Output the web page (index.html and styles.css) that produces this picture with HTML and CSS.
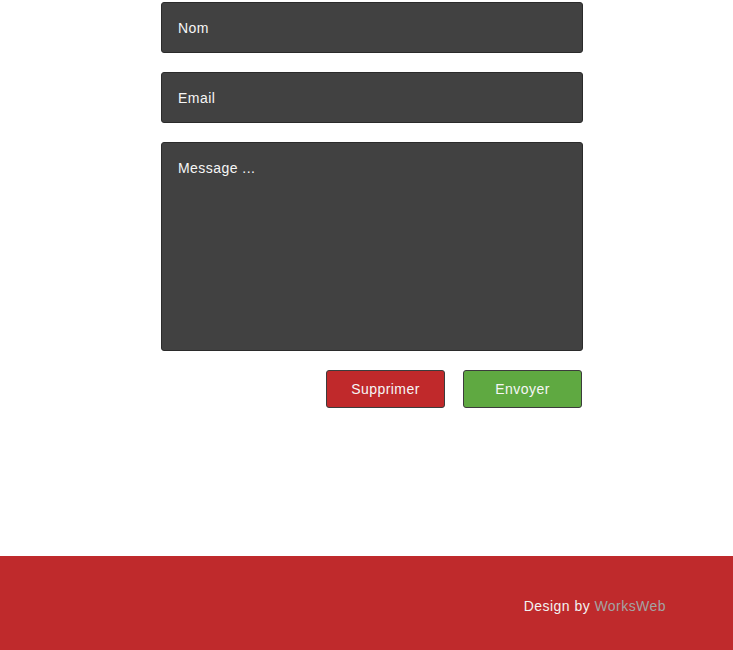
FILE: index.html
```html
<!DOCTYPE html>
<html lang="fr">
<head>
<meta charset="utf-8">
<title>Contact</title>
<link rel="stylesheet" href="styles.css">
</head>
<body>
<main class="page">
  <form class="contact-form">
    <input class="field" type="text" placeholder="Nom">
    <input class="field" type="email" placeholder="Email">
    <textarea class="field field-message" placeholder="Message ..."></textarea>
    <div class="actions">
      <button type="reset" class="btn btn-reset">Supprimer</button>
      <button type="submit" class="btn btn-send">Envoyer</button>
    </div>
  </form>
</main>
<footer class="footer">
  <p class="credit">Design by <a href="#" class="credit-link">WorksWeb</a></p>
</footer>
</body>
</html>
```
FILE: styles.css
```css
* { box-sizing: border-box; }
html, body { margin: 0; padding: 0; background: #ffffff; }
body {
  font-family: "Liberation Sans", Arial, Helvetica, sans-serif;
  font-size: 14px;
  letter-spacing: 0.45px;
  display: flex;
  flex-direction: column;
  min-height: 650px;
}
.page {
  flex: 1;
  padding-top: 2px;
}
.contact-form {
  width: 422px;
  margin-left: 161px;
  display: flex;
  flex-direction: column;
  gap: 19px;
}
.field {
  display: block;
  width: 100%;
  height: 51px;
  margin: 0;
  padding: 1px 16px 0;
  background: #414141;
  border: 1px solid #2b2b2b;
  border-radius: 3px;
  color: #f6f6f6;
  font-family: inherit;
  font-size: 14px;
  letter-spacing: 0.45px;
  outline: none;
}
.field::placeholder { color: #f6f6f6; opacity: 1; }
.field-message {
  height: 209px;
  padding-top: 16px;
  line-height: 18px;
  resize: none;
}
.actions {
  display: flex;
  justify-content: flex-end;
  gap: 18px;
  padding-right: 1px;
}
.btn {
  width: 119px;
  height: 38px;
  border: 1px solid #3c3c3c;
  border-radius: 3px;
  color: #f6f6f6;
  font-family: inherit;
  font-size: 14px;
  letter-spacing: 0.45px;
  cursor: pointer;
  padding: 0;
}
.btn-reset { background: #c0292b; }
.btn-send { background: #5fa941; }
.footer {
  height: 94px;
  background: #bf2a2c;
  display: flex;
  justify-content: flex-end;
  align-items: center;
  padding-right: 67px;
  padding-top: 6px;
}
.credit {
  margin: 0;
  color: #f2f2f2;
  font-size: 14px;
}
.credit-link {
  color: #a3a3a3;
  text-decoration: none;
}
```
